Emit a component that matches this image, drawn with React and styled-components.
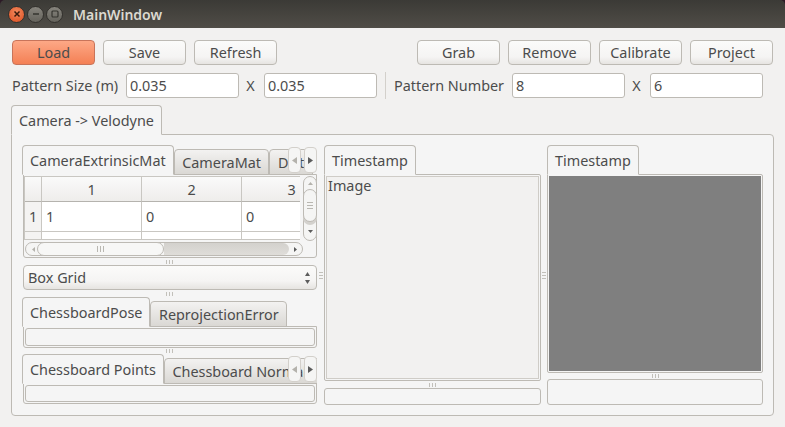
import React from "react";
import styled, { createGlobalStyle } from "styled-components";

const Global = createGlobalStyle`
  html, body {
    margin: 0;
    padding: 0;
    background: #2c1a26;
  }
  * {
    box-sizing: border-box;
  }
`;

export default function App() {
  return (
    <Window>
      <Global />
      <TitleBar>
        <WindowButtons>
          <CloseButton>
            <svg width="8" height="8" viewBox="0 0 8 8">
              <path d="M1.5 1.5l5 5M6.5 1.5l-5 5" stroke="#3a1a0c" strokeWidth="1.5" />
            </svg>
          </CloseButton>
          <GreyButton>
            <svg width="8" height="8" viewBox="0 0 8 8">
              <path d="M1 4h6" stroke="#35342f" strokeWidth="1.5" />
            </svg>
          </GreyButton>
          <GreyButton>
            <svg width="8" height="8" viewBox="0 0 8 8">
              <rect x="1" y="1" width="6" height="6" rx="1" fill="none" stroke="#35342f" strokeWidth="1.2" />
            </svg>
          </GreyButton>
        </WindowButtons>
        <Title>MainWindow</Title>
      </TitleBar>

      <Content>
        <Toolbar>
          <ButtonGroup>
            <PushButton $primary>Load</PushButton>
            <PushButton>Save</PushButton>
            <PushButton>Refresh</PushButton>
          </ButtonGroup>
          <ButtonGroup>
            <PushButton>Grab</PushButton>
            <PushButton>Remove</PushButton>
            <PushButton>Calibrate</PushButton>
            <PushButton>Project</PushButton>
          </ButtonGroup>
        </Toolbar>

        <FieldRow>
          <FieldLabel $width={114}>Pattern Size (m)</FieldLabel>
          <TextField defaultValue="0.035" />
          <Times>X</Times>
          <TextField defaultValue="0.035" />
          <Separator />
          <FieldLabel $width={118}>Pattern Number</FieldLabel>
          <TextField defaultValue="8" />
          <Times>X</Times>
          <TextField defaultValue="6" />
        </FieldRow>

        <MainTabBar>
          <Tab $active>Camera -&gt; Velodyne</Tab>
        </MainTabBar>
        <MainPane>
          <LeftColumn>
            <TabWidget $height={113}>
              <TabBar>
                <Tab $active>CameraExtrinsicMat</Tab>
                <Tab>CameraMat</Tab>
                <Tab>Dist</Tab>
                <ScrollButtons />
              </TabBar>
              <TablePane>
                <TableArea>
                  <MatrixTable>
                    <CornerCell />
                    <HeaderCell>1</HeaderCell>
                    <HeaderCell>2</HeaderCell>
                    <HeaderCell>3</HeaderCell>
                    <RowHeader>1</RowHeader>
                    <DataCell>1</DataCell>
                    <DataCell>0</DataCell>
                    <DataCell>0</DataCell>
                    <RowHeader />
                    <DataCell />
                    <DataCell />
                    <DataCell />
                  </MatrixTable>
                  <VScrollBar>
                    <svg width="7" height="12" viewBox="0 0 7 12">
                      <path d="M3.5 5l2.5 3H1z" fill="#b4b2ac" />
                    </svg>
                    <VThumb>
                      <GripLines $vertical />
                    </VThumb>
                    <svg width="7" height="16" viewBox="0 0 7 16">
                      <path d="M3.5 11L1 8h5z" fill="#5c5c5c" />
                    </svg>
                  </VScrollBar>
                </TableArea>
                <HScrollBar>
                  <svg width="9" height="7" viewBox="0 0 9 7">
                    <path d="M4 3.5L7 1v5z" fill="#b4b2ac" />
                  </svg>
                  <HThumb>
                    <GripLines />
                  </HThumb>
                  <HTrack />
                  <svg width="9" height="7" viewBox="0 0 9 7">
                    <path d="M6 3.5L3 1v5z" fill="#5c5c5c" />
                  </svg>
                </HScrollBar>
              </TablePane>
            </TabWidget>

            <RowHandle $height={7} />
            <ComboBox>
              Box Grid
              <svg width="7" height="14" viewBox="0 0 7 14">
                <path d="M3.5 1L6 5H1zM3.5 13L1 9h5z" fill="#5c5c5c" />
              </svg>
            </ComboBox>
            <RowHandle $height={7} />

            <TabWidget $height={51}>
              <TabBar>
                <Tab $active>ChessboardPose</Tab>
                <Tab>ReprojectionError</Tab>
              </TabBar>
              <BoxPane>
                <InnerBox />
              </BoxPane>
            </TabWidget>

            <RowHandle $height={6} />

            <TabWidget $height={50}>
              <TabBar>
                <Tab $active>Chessboard Points</Tab>
                <Tab>Chessboard Normals</Tab>
                <ScrollButtons />
              </TabBar>
              <BoxPane>
                <InnerBox />
              </BoxPane>
            </TabWidget>
          </LeftColumn>

          <ColumnHandle $width={7} />

          <ImageColumn $width={217}>
            <TabBar>
              <Tab $active>Timestamp</Tab>
            </TabBar>
            <ImageFrame>
              <ImageLabel>Image</ImageLabel>
            </ImageFrame>
            <RowHandle $height={7} />
            <InfoBox $height={17} />
          </ImageColumn>

          <ColumnHandle $width={6} />

          <ImageColumn $width={216}>
            <TabBar>
              <Tab $active>Timestamp</Tab>
            </TabBar>
            <ImageFrame>
              <GreyImage />
            </ImageFrame>
            <RowHandle $height={6} />
            <InfoBox $height={26} />
          </ImageColumn>
        </MainPane>
      </Content>
    </Window>
  );
}

function ScrollButtons() {
  return (
    <ScrollOverlay>
      <ScrollButton>
        <svg width="7" height="9" viewBox="0 0 7 9">
          <path d="M1 4.5L6 1v7z" fill="#b4b2ac" />
        </svg>
      </ScrollButton>
      <ScrollButton>
        <svg width="7" height="9" viewBox="0 0 7 9">
          <path d="M6 4.5L1 1v7z" fill="#5c5c5c" />
        </svg>
      </ScrollButton>
    </ScrollOverlay>
  );
}

function GripLines({ $vertical }) {
  return (
    <Grip $vertical={$vertical}>
      <i />
      <i />
      <i />
    </Grip>
  );
}

const Window = styled.div`
  width: 785px;
  height: 427px;
  overflow: hidden;
  display: flex;
  flex-direction: column;
  font-family: "Noto Sans", sans-serif;
  font-size: 14.4px;
  color: #4c4c4c;
`;

const TitleBar = styled.div`
  height: 28px;
  flex: none;
  display: flex;
  align-items: center;
  padding-left: 8px;
  border-radius: 5px 5px 0 0;
  background: linear-gradient(#3b3a36, #504d47);
`;

const WindowButtons = styled.div`
  display: flex;
  gap: 2px;
  width: 65px;
`;

const CloseButton = styled.div`
  width: 17px;
  height: 17px;
  border-radius: 50%;
  display: flex;
  align-items: center;
  justify-content: center;
  background: radial-gradient(circle at 50% 35%, #f28a5e, #dc4d1f);
  border: 1px solid #33312d;
`;

const GreyButton = styled(CloseButton)`
  background: linear-gradient(#86847d, #65635c);
`;

const Title = styled.div`
  font-size: 14px;
  font-weight: 600;
  color: #dcd9d0;
`;

const Content = styled.div`
  flex: 1;
  background: #f2f1f0;
  padding: 12px 12px 0 12px;
`;

const Toolbar = styled.div`
  display: flex;
  justify-content: space-between;
`;

const ButtonGroup = styled.div`
  display: flex;
  gap: 8px;
`;

const PushButton = styled.div`
  width: 83px;
  height: 25px;
  display: flex;
  align-items: center;
  justify-content: center;
  border-radius: 4px;
  border: 1px solid ${(p) => (p.$primary ? "#c8745a" : "#bdbab4")};
  background: ${(p) =>
    p.$primary
      ? "linear-gradient(#fda886, #f48055)"
      : "linear-gradient(#fbfbfa, #f5f4f3 70%, #e6e4e1)"};
`;

const FieldRow = styled.div`
  display: flex;
  align-items: center;
  height: 25px;
  margin-top: 8px;
`;

const FieldLabel = styled.div`
  width: ${(p) => p.$width}px;
  white-space: nowrap;
`;

const TextField = styled.input`
  width: 113px;
  height: 25px;
  padding: 0 3px;
  border: 1px solid #bdbab4;
  border-radius: 3px;
  background: #fff;
  font: inherit;
  color: inherit;
  outline: none;
`;

const Times = styled.div`
  width: 25px;
  padding-right: 2px;
  text-align: center;
`;

const Separator = styled.div`
  width: 1px;
  height: 27px;
  margin: 0 8px 0 8px;
  background: #d3d0cb;
`;

const MainTabBar = styled.div`
  display: flex;
  height: 30px;
  margin-top: 7px;
  margin-left: -1px;
  position: relative;
  z-index: 1;
`;

const TabBar = styled.div`
  position: relative;
  flex: none;
  display: flex;
  height: 30px;
  overflow: hidden;
  margin-bottom: -1px;
  z-index: 1;
`;

const Tab = styled.div`
  flex: none;
  white-space: nowrap;
  display: flex;
  align-items: center;
  border: 1px solid #bdbab4;
  border-radius: 4px 4px 0 0;
  ${(p) =>
    p.$active
      ? `height: 30px; padding: 0 7px; background: #f5f5f5; border-bottom-color: #f5f5f5;`
      : `height: 26px; padding: 0 7.5px; margin-top: 4px; border-bottom-color: #bdbab4; background: linear-gradient(#f3f2f1, #dad8d4);`}
`;

const MainPane = styled.div`
  width: 763px;
  height: 282px;
  margin-left: -1px;
  margin-top: -1px;
  padding: 10px;
  display: flex;
  background: #f5f5f5;
  border: 1px solid #bdbab4;
  border-radius: 0 4px 4px 4px;
`;

const LeftColumn = styled.div`
  width: 295px;
  flex: none;
  display: flex;
  flex-direction: column;
`;

const TabWidget = styled.div`
  height: ${(p) => p.$height}px;
  flex: none;
  display: flex;
  flex-direction: column;
`;

const ScrollOverlay = styled.div`
  position: absolute;
  top: 2px;
  right: 0;
  display: flex;
  gap: 3px;
`;

const ScrollButton = styled.div`
  width: 13px;
  height: 26px;
  display: flex;
  align-items: center;
  justify-content: center;
  border: 1px solid #d3d0cb;
  border-radius: 4px;
  background: #f5f5f4;
`;

const TablePane = styled.div`
  flex: 1;
  margin-left: 1px;
  padding: 1px 0 0;
  display: flex;
  flex-direction: column;
  border: 1px solid #bdbab4;
  border-radius: 0 0 3px 3px;
  background: #f5f5f5;
`;

const TableArea = styled.div`
  height: 65px;
  display: flex;
`;

const MatrixTable = styled.div`
  width: 276px;
  height: 64px;
  overflow: hidden;
  flex: none;
  display: grid;
  grid-template-columns: 17px 100px 100px 100px;
  grid-template-rows: 25px 30px 30px;
  border-left: 1px solid #c9c7c2;
  border-top: 1px solid #c9c7c2;
  border-bottom: 1px solid #c9c7c2;
  background: #fff;
`;

const HeaderCell = styled.div`
  display: flex;
  align-items: center;
  justify-content: center;
  border-right: 1px solid #c9c7c2;
  border-bottom: 1px solid #b5b3ae;
  background: linear-gradient(#fafafa, #eeedeb);
`;

const CornerCell = styled(HeaderCell)``;

const RowHeader = styled.div`
  display: flex;
  align-items: center;
  justify-content: center;
  border-right: 1px solid #c9c7c2;
  border-bottom: 1px solid #c9c7c2;
  background: #f4f3f2;
`;

const DataCell = styled.div`
  display: flex;
  align-items: center;
  padding-left: 4px;
  border-right: 1px solid #c9c7c2;
  border-bottom: 1px solid #c9c7c2;
  background: #fff;
`;

const VScrollBar = styled.div`
  width: 14px;
  height: 65px;
  flex: none;
  margin-left: 3px;
  display: flex;
  flex-direction: column;
  align-items: center;
  border: 1px solid #bdbab4;
  border-radius: 7px;
  background: #f5f5f4;
`;

const VThumb = styled.div`
  width: 14px;
  height: 33px;
  flex: none;
  display: flex;
  align-items: center;
  justify-content: center;
  border: 1px solid #bdbab4;
  border-radius: 7px;
  background: #f5f5f4;
  box-shadow: 0 3px 0 #d3d1cd;
`;

const HScrollBar = styled.div`
  width: 278px;
  height: 14px;
  margin: 1px 0 0 1px;
  display: flex;
  align-items: center;
  padding: 0 2px;
  border: 1px solid #bdbab4;
  border-radius: 7px;
  background: #f5f5f4;
`;

const HThumb = styled.div`
  width: 127px;
  height: 14px;
  flex: none;
  display: flex;
  align-items: center;
  justify-content: center;
  border: 1px solid #bdbab4;
  border-radius: 7px;
  background: #f7f7f6;
`;

const HTrack = styled.div`
  flex: 1;
  height: 12px;
  background: linear-gradient(#d3d1cd, #dfddd9);
  border-radius: 0 6px 6px 0;
  margin-right: 2px;
`;

const Grip = styled.div`
  display: flex;
  flex-direction: ${(p) => (p.$vertical ? "column" : "row")};
  gap: 2px;

  i {
    display: block;
    background: #b9b7b1;
    width: ${(p) => (p.$vertical ? "6px" : "1px")};
    height: ${(p) => (p.$vertical ? "1px" : "6px")};
  }
`;

const RowHandle = styled.div`
  height: ${(p) => p.$height}px;
  flex: none;
  display: flex;
  align-items: center;
  justify-content: center;

  &::before {
    content: "";
    width: 7px;
    height: 4px;
    background: repeating-linear-gradient(90deg, #c2c0ba 0 1px, transparent 1px 3px);
  }
`;

const ColumnHandle = styled.div`
  width: ${(p) => p.$width}px;
  flex: none;
  display: flex;
  align-items: center;
  justify-content: center;

  &::before {
    content: "";
    width: 4px;
    height: 7px;
    background: repeating-linear-gradient(180deg, #c2c0ba 0 1px, transparent 1px 3px);
  }
`;

const ComboBox = styled.div`
  height: 25px;
  flex: none;
  margin-left: 1px;
  display: flex;
  align-items: center;
  justify-content: space-between;
  padding: 0 5px 0 4px;
  border: 1px solid #bdbab4;
  border-radius: 4px;
  background: linear-gradient(#fbfbfa, #f5f4f3 65%, #e6e4e1);
`;

const BoxPane = styled.div`
  flex: 1;
  margin-left: 1px;
  padding: 1px;
  display: flex;
  border: 1px solid #bdbab4;
  border-radius: 0 0 3px 3px;
`;

const InnerBox = styled.div`
  flex: 1;
  border: 1px solid #bdbab4;
  border-radius: 3px;
  background: #f5f5f5;
`;

const ImageColumn = styled.div`
  width: ${(p) => p.$width}px;
  flex: none;
  display: flex;
  flex-direction: column;
`;

const ImageFrame = styled.div`
  flex: 1;
  min-height: 0;
  padding: 1px;
  display: flex;
  flex-direction: column;
  border: 1px solid #bdbab4;
  border-radius: 0 2px 2px 2px;
  background: #f5f5f5;
`;

const ImageLabel = styled.div`
  flex: 1;
  padding-left: 1px;
  line-height: 18px;
  border: 1px solid #cfccc7;
  background: #f2f1f0;
`;

const GreyImage = styled.div`
  flex: 1;
  background: #7f7f7f;
`;

const InfoBox = styled.div`
  height: ${(p) => p.$height}px;
  flex: none;
  border: 1px solid #bdbab4;
  border-radius: 3px;
  background: #f5f5f5;
`;
